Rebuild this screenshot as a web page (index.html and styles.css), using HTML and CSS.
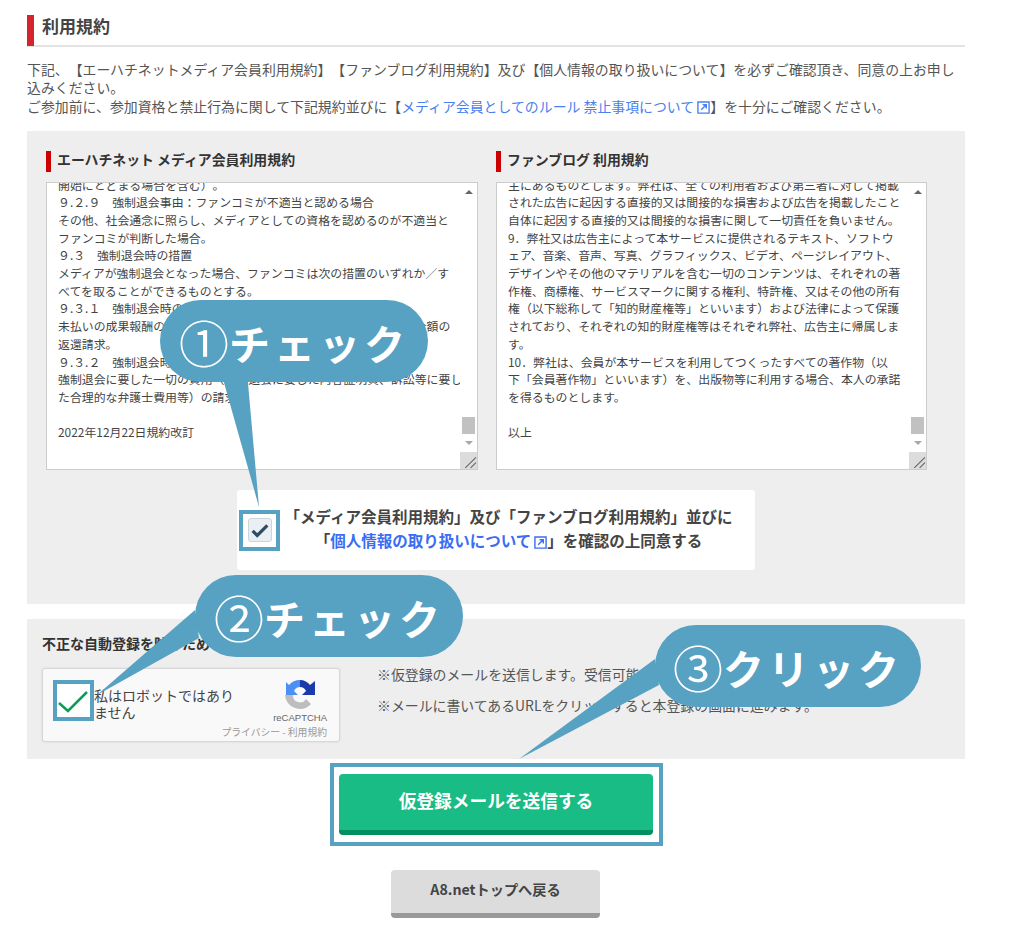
FILE: index.html
```html
<!DOCTYPE html>
<html lang="ja">
<head>
  <meta charset="UTF-8">
  <meta name="viewport" content="width=device-width, initial-scale=1.0">
  <title>利用規約</title>
  <link rel="stylesheet" href="styles.css">
</head>
<body>
  <div class="page">
    <h2 class="page-title"><span>利用規約</span></h2>
    <p class="intro">下記、【エーハチネットメディア会員利用規約】【ファンブログ利用規約】及び【個人情報の取り扱いについて】を必ずご確認頂き、同意の上お申し込みください。<br>ご参加前に、参加資格と禁止行為に関して下記規約並びに【<a href="#">メディア会員としてのルール 禁止事項について<svg class="ext" viewBox="0 0 14 14"><path d="M1 1h12v12H1z M4.5 9.500L10 4 M6 4h4v4"/></svg></a>】を十分にご確認ください。</p>

    <section class="terms">
      <div class="terms-cols">
        <div class="terms-col">
          <h3 class="terms-title">エーハチネット メディア会員利用規約</h3>
          <div class="textbox">
            <div class="textbox-text">開始にとどまる場合を含む）。<br>９.２.９　強制退会事由：ファンコミが不適当と認める場合<br>その他、社会通念に照らし、メディアとしての資格を認めるのが不適当と<br>ファンコミが判断した場合。<br>９.３　強制退会時の措置<br>メディアが強制退会となった場合、ファンコミは次の措置のいずれか／す<br>べてを取ることができるものとする。<br>９.３.１　強制退会時の成果報酬<br>未払いの成果報酬の没収及び、支払済の成果報酬相当額の一部又は全額の<br>返還請求。<br>９.３.２　強制退会時の費用請求<br>強制退会に要した一切の費用（強制退会に要した内容証明費、訴訟等に要し<br>た合理的な弁護士費用等）の請求。<br><br>2022年12月22日規約改訂</div>
            <div class="scrollbar">
              <i class="arrow-up"></i>
              <i class="thumb"></i>
              <i class="arrow-down"></i>
              <div class="grip"><svg viewBox="0 0 16 16"><path d="M5 15L15 5 M10 15l5-5"/></svg></div>
            </div>
          </div>
        </div>
        <div class="terms-col">
          <h3 class="terms-title">ファンブログ 利用規約</h3>
          <div class="textbox">
            <div class="textbox-text">主にあるものとします。弊社は、全ての利用者および第三者に対して掲載<br>された広告に起因する直接的又は間接的な損害および広告を掲載したこと<br>自体に起因する直接的又は間接的な損害に関して一切責任を負いません。<br>9．弊社又は広告主によって本サービスに提供されるテキスト、ソフトウ<br>ェア、音楽、音声、写真、グラフィックス、ビデオ、ページレイアウト、<br>デザインやその他のマテリアルを含む一切のコンテンツは、それぞれの著<br>作権、商標権、サービスマークに関する権利、特許権、又はその他の所有<br>権（以下総称して「知的財産権等」といいます）および法律によって保護<br>されており、それぞれの知的財産権等はそれぞれ弊社、広告主に帰属しま<br>す。<br>10．弊社は、会員が本サービスを利用してつくったすべての著作物（以<br>下「会員著作物」といいます）を、出版物等に利用する場合、本人の承諾<br>を得るものとします。<br><br>以上</div>
            <div class="scrollbar">
              <i class="arrow-up"></i>
              <i class="thumb"></i>
              <i class="arrow-down"></i>
              <div class="grip"><svg viewBox="0 0 16 16"><path d="M5 15L15 5 M10 15l5-5"/></svg></div>
            </div>
          </div>
        </div>
      </div>
      <div class="agree">
        <div class="agree-check">
          <span class="checkbox"><svg viewBox="0 0 24 24"><path d="M4 13l5 5 11-11"/></svg></span>
        </div>
        <p class="agree-text">「メディア会員利用規約」及び「ファンブログ利用規約」並びに<br>「<a href="#">個人情報の取り扱いについて<svg class="ext" viewBox="0 0 14 14"><path d="M1 1h12v12H1z M4.5 9.500L10 4 M6 4h4v4"/></svg></a>」を確認の上同意する</p>
      </div>
    </section>

    <section class="captcha-section">
      <h3 class="captcha-title">不正な自動登録を防ぐため</h3>
      <div class="captcha-row">
        <div class="captcha">
          <div class="captcha-check"><svg viewBox="0 0 33 33"><path d="M2 19l9 8L30 8"/></svg></div>
          <div class="captcha-label">私はロボットではありません</div>
          <div class="captcha-brand">
            <svg class="captcha-logo" viewBox="0 0 30 32">
              <path class="logo-grey" d="M0 16H8A7 7 0 0 0 21 20L26 25A15 15 0 0 1 0 16z"/>
              <path class="logo-blue" d="M15 1A15 15 0 0 0 4 6L1 3V16H13L9 12A7 7 0 0 1 15 8z"/>
              <path class="logo-navy" d="M15 1C19 1 23 3 25 6L30 2V16H17L21 12A7 7 0 0 0 15 8z"/>
            </svg>
            <div class="captcha-name">reCAPTCHA</div>
            <div class="captcha-links">プライバシー - 利用規約</div>
          </div>
        </div>
        <div class="captcha-notes">
          <p>※仮登録のメールを送信します。受信可能なメールアドレスをご確認ください。</p>
          <p>※メールに書いてあるURLをクリックすると本登録の画面に進みます。</p>
        </div>
      </div>
    </section>

    <div class="submit-frame">
      <button class="btn-submit">仮登録メールを送信する</button>
    </div>
    <div class="back-row">
      <button class="btn-back">A8.netトップへ戻る</button>
    </div>
  </div>

  <!-- 説明用の吹き出し -->
  <div class="callout callout-1">
    <svg class="tail tail-1" viewBox="0 0 60 140"><path d="M0 0H26L38 135z"/></svg>
    <span><b class="num">①</b>チェック</span>
  </div>
  <div class="callout callout-2">
    <svg class="tail tail-2" viewBox="0 0 120 100"><path d="M116 0L120 28 18 85z"/></svg>
    <span><b class="num">②</b>チェック</span>
  </div>
  <div class="callout callout-3">
    <svg class="tail tail-3" viewBox="0 0 150 100"><path d="M146 0L150 26 10 100z"/></svg>
    <span><b class="num">③</b>クリック</span>
  </div>
</body>
</html>
```

FILE: styles.css
```css
* {
  box-sizing: border-box;
}
body {
  margin: 0;
  font-family: "Noto Sans CJK JP", "Noto Sans", sans-serif;
  font-size: 13.9px;
  line-height: 18.4px;
  color: #555;
  background: #fff;
  text-spacing-trim: space-all;
}
.page {
  width: 965px;
  height: 928px;
  padding: 15px 0 0 27px;
  overflow: hidden;
}
a {
  color: #4a80f0;
  text-decoration: none;
}
.ext {
  width: 13px;
  height: 13px;
  margin-left: 3px;
  vertical-align: -2px;
  fill: none;
  stroke: currentColor;
  stroke-width: 1.5;
}

.page-title {
  margin: 0;
  border-bottom: 2px solid #e4e4e4;
  font-size: 17px;
  line-height: 22px;
  color: #444;
}
.page-title span {
  display: block;
  height: 31px;
  margin-bottom: -1px;
  padding-left: 8px;
  border-left: 7px solid #d4242c;
}
.intro {
  margin: 13px 0 15px;
  height: 56px;
}

.terms {
  height: 473px;
  padding: 20px 19px 0;
  background: #eee;
}
.terms-cols {
  display: flex;
  gap: 18px;
}
.terms-col {
  width: 432px;
}
.terms-col + .terms-col {
  width: 431px;
}
.terms-title {
  height: 21px;
  margin: 0 0 10px;
  padding-left: 6px;
  border-left: 5px solid #c00;
  font-size: 13.9px;
  line-height: 16px;
  color: #333;
}
.textbox {
  display: flex;
  height: 288px;
  border: 1px solid #ccc;
  background: #fff;
}
.textbox-text {
  flex: 1;
  height: 286px;
  overflow: hidden;
  padding-left: 11px;
  font-size: 11.9px;
  line-height: 17.7px;
  color: #444;
  white-space: nowrap;
}
.textbox-text::before {
  content: "";
  display: block;
  margin-top: -7.500px;
}
.scrollbar {
  display: flex;
  flex-direction: column;
  align-items: center;
  width: 17px;
  background: #fff;
}
.arrow-up,
.arrow-down {
  display: block;
  width: 0;
  height: 0;
  border-left: 4px solid transparent;
  border-right: 4px solid transparent;
}
.arrow-up {
  margin-top: 7px;
  border-bottom: 4px solid #666;
}
.arrow-down {
  margin-top: 7px;
  border-top: 4px solid #a8a8a8;
}
.thumb {
  display: block;
  width: 13px;
  height: 17px;
  margin-top: auto;
  background: #c1c1c1;
}
.grip {
  width: 17px;
  height: 17px;
  margin-top: 7px;
  background: #dcdcdc;
}
.grip svg {
  display: block;
  fill: none;
  stroke: #666;
  stroke-width: 1;
}

.agree {
  display: flex;
  align-items: center;
  width: 518px;
  height: 80px;
  margin: 20px 0 0 191px;
  padding-left: 2px;
  border-radius: 3px;
  background: #fff;
}
.agree-check {
  display: flex;
  align-items: center;
  justify-content: center;
  flex: none;
  width: 41px;
  height: 41px;
  border: 4px solid #57a1c2;
  background: #fff;
}
.agree-check .checkbox {
  width: 24px;
  height: 24px;
  border: 1px solid #cfd4da;
  border-radius: 3px;
  background: #eaeff3;
}
.checkbox svg {
  display: block;
  fill: none;
  stroke: #2f4b66;
  stroke-width: 3.5;
}
.agree-text {
  flex: 1;
  margin: -4px 0 0;
  padding-right: 18px;
  font-size: 15.5px;
  font-weight: 700;
  line-height: 24px;
  text-align: center;
  color: #444;
  white-space: nowrap;
}
.agree-text a {
  color: #3a6cf4;
}

.captcha-section {
  height: 140px;
  margin-top: 15px;
  padding: 15px 15px 0;
  background: #eee;
}
.captcha-title {
  margin: 0 0 15px;
  font-size: 14px;
  line-height: 19px;
  color: #333;
}
.captcha-row {
  display: flex;
  gap: 37px;
}
.captcha {
  display: flex;
  flex: none;
  width: 298px;
  height: 74px;
  padding: 11px 12px 0 10px;
  border: 1px solid #d6d6d6;
  border-radius: 3px;
  background: #f9f9f9;
  box-shadow: 0 0 3px rgba(0, 0, 0, 0.08);
}
.captcha-check {
  flex: none;
  width: 41px;
  height: 41px;
  border: 4px solid #57a1c2;
  background: #fff;
}
.captcha-check svg {
  display: block;
  fill: none;
  stroke: #0b9d58;
  stroke-width: 2.500;
}
.captcha-label {
  width: 140px;
  padding-top: 7px;
  font-size: 14px;
  line-height: 17px;
  color: #444;
}
.captcha-brand {
  flex: 1;
  margin-top: -1px;
  text-align: right;
}
.captcha-logo {
  display: block;
  width: 30px;
  height: 32px;
  margin: 0 12px 0 auto;
}
.logo-grey { fill: #bdbdbd; }
.logo-blue { fill: #4a90f5; }
.logo-navy { fill: #1c3aa9; }
.captcha-name {
  margin-top: 0;
  font-family: "Liberation Sans", sans-serif;
  font-size: 9.500px;
  line-height: 14px;
  color: #666;
}
.captcha-links {
  margin-left: -60px;
  font-size: 9.800px;
  line-height: 14px;
  color: #999;
  white-space: nowrap;
}
.captcha-notes {
  margin-top: -3px;
}
.captcha-notes p {
  margin: 0 0 12.500px;
}

.submit-frame {
  display: flex;
  align-items: center;
  width: 333px;
  height: 83px;
  margin: 4px 0 0 303px;
  padding-left: 5px;
  border: 4px solid #57a1c2;
  background: #fff;
}
.btn-submit {
  width: 314px;
  height: 61px;
  padding: 0 0 5px;
  border: none;
  border-bottom: 5px solid #00905f;
  border-radius: 4px;
  background: #1abc85;
  font: 700 17.700px "Noto Sans CJK JP", sans-serif;
  color: #fff;
}
.back-row {
  margin: 24px 0 0 364px;
}
.btn-back {
  display: block;
  width: 209px;
  height: 48px;
  padding: 0 0 5px;
  border: none;
  border-bottom: 5px solid #999;
  border-radius: 4px;
  background: #dcdcdc;
  font: 700 14.200px "Noto Sans CJK JP", sans-serif;
  color: #444;
}

.callout {
  position: absolute;
  display: flex;
  align-items: center;
  justify-content: center;
  height: 82px;
  border-radius: 41px;
  background: #57a1c2;
  font-size: 41px;
  font-weight: 700;
  letter-spacing: 4px;
  color: #fff;
  white-space: nowrap;
}
.callout span {
  position: relative;
}
.num {
  font-size: 50px;
  font-weight: 400;
  line-height: 1;
  letter-spacing: 0;
  vertical-align: -3px;
}
.tail {
  position: absolute;
  fill: #57a1c2;
}
.callout-1 {
  left: 160px;
  top: 300px;
  width: 268px;
}
.tail-1 {
  left: 61px;
  top: 72px;
  width: 60px;
  height: 140px;
}
.callout-2 {
  left: 195px;
  top: 575px;
  width: 268px;
}
.tail-2 {
  left: -116px;
  top: 35px;
  width: 120px;
  height: 100px;
}
.callout-3 {
  left: 655px;
  top: 625px;
  width: 266px;
}
.tail-3 {
  left: -146px;
  top: 34px;
  width: 150px;
  height: 100px;
}
```
